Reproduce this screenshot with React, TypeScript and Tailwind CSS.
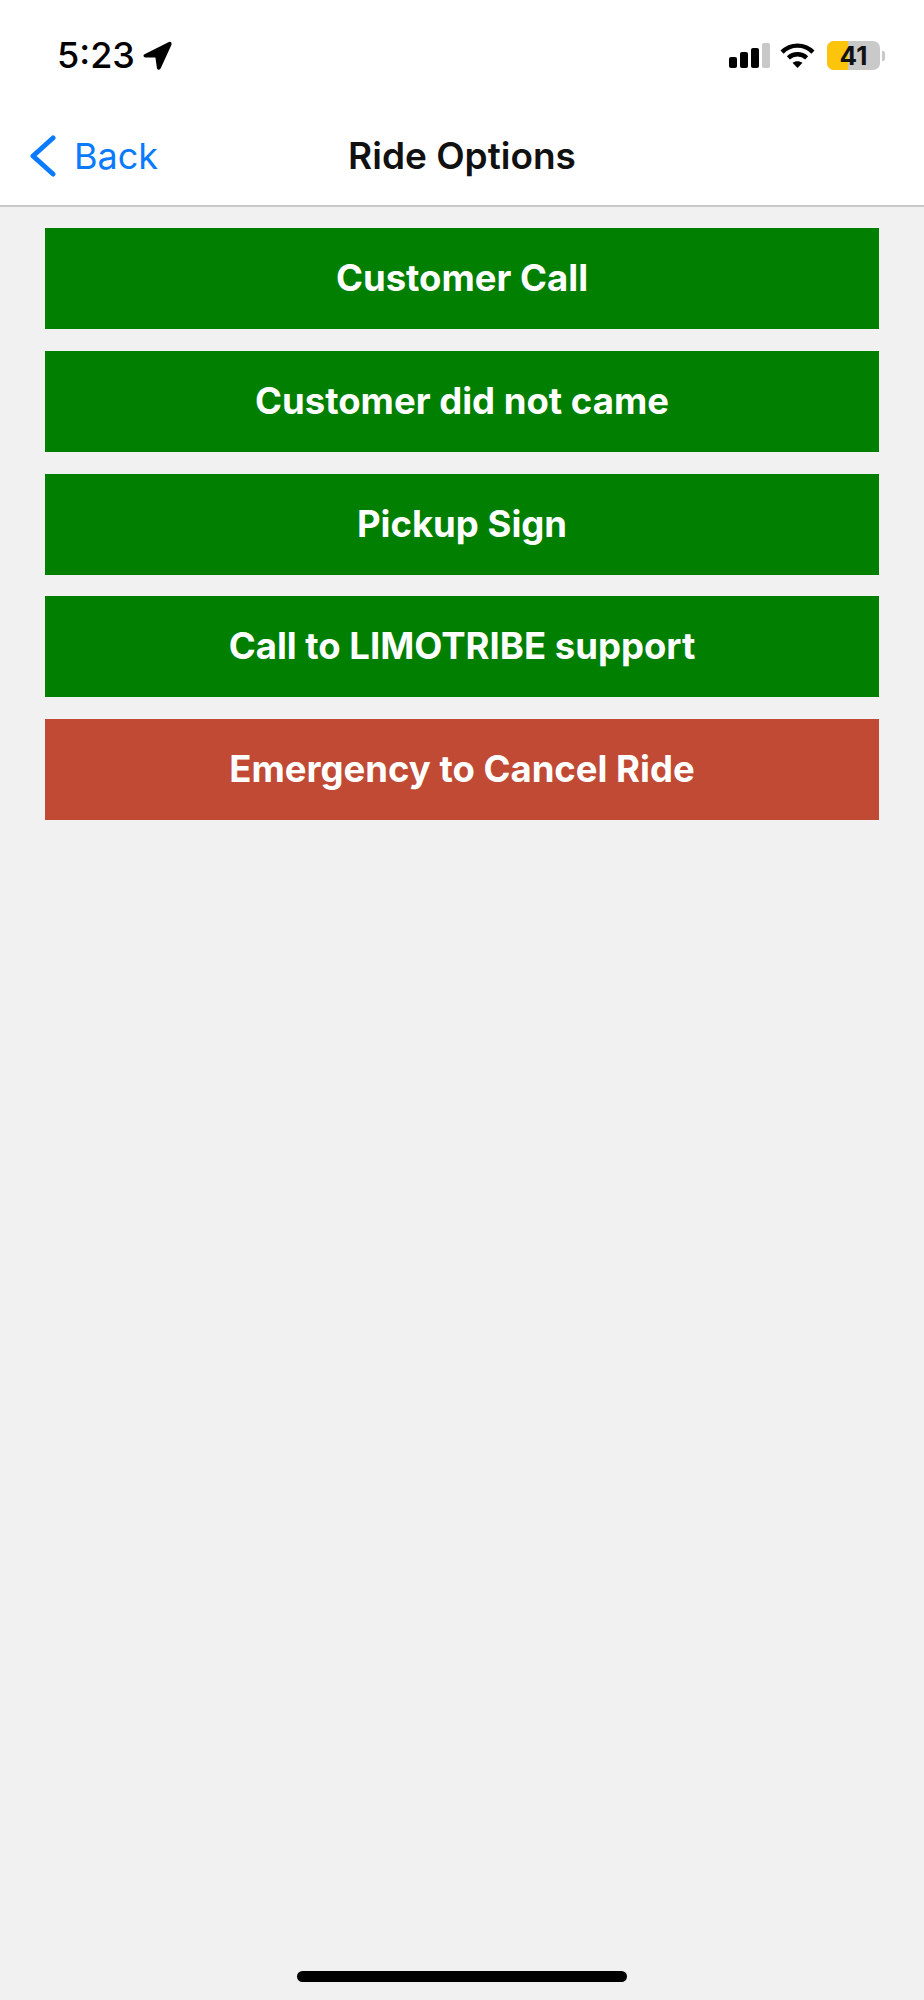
const options = [
  { label: 'Customer Call', color: 'bg-[#007f00]' },
  { label: 'Customer did not came', color: 'bg-[#007f00]' },
  { label: 'Pickup Sign', color: 'bg-[#007f00]' },
  { label: 'Call to LIMOTRIBE support', color: 'bg-[#007f00]' },
  { label: 'Emergency to Cancel Ride', color: 'bg-[#c14a34]' },
]

function StatusBar() {
  return (
    <div className="flex h-[110px] items-start justify-between pl-[57px] pr-[39px] pt-[35px]">
      <div className="flex items-center gap-[8px]">
        <span className="text-[36px] leading-[40px] font-medium text-black">5:23</span>
        <svg width="29" height="29" viewBox="0 0 28 28" fill="black">
          <path d="M1 13 L25 1 Q28 0 27.5 3.5 L17 26.5 Q15 28.8 13.5 26.5 L12 16 L2 16 Q-0.5 15 1 13Z" />
        </svg>
      </div>
      <div className="flex items-center pt-[6px]">
        <div className="mr-[10px] flex items-end gap-[3px]">
          <div className="h-[11px] w-[8px] rounded-[2px] bg-black" />
          <div className="h-[16px] w-[8px] rounded-[2px] bg-black" />
          <div className="h-[20px] w-[8px] rounded-[2px] bg-black" />
          <div className="h-[25px] w-[8px] rounded-[2px] bg-[#c8c8c8]" />
        </div>
        <svg className="mr-[12px]" width="35" height="27" viewBox="0 0 36 28" fill="none" stroke="black" strokeWidth="4.6">
          <path d="M2 10.5 C11 1.5 25 1.5 34 10.5" />
          <path d="M8.5 16.5 C14 11.5 22 11.5 27.5 16.5" />
          <path d="M18 27 L12.8 21.5 C15.5 19.3 20.5 19.3 23.2 21.5 Z" fill="black" stroke="none" />
        </svg>
        <div className="flex items-center gap-[2px]">
          <div className="relative flex h-[29px] w-[53px] items-center justify-center rounded-[7px] bg-[#c9c9c9]">
            <div className="absolute inset-y-0 left-0 w-[21px] rounded-l-[7px] bg-[#fcc40a]" />
            <span className="relative text-[26px] leading-[29px] font-bold text-[#111111]">41</span>
          </div>
          <div className="h-[10px] w-[3px] rounded-r-[2px] bg-[#c9c9c9]" />
        </div>
      </div>
    </div>
  )
}

export default function App() {
  return (
    <div className="flex min-h-[2000px] flex-col bg-[#f1f1f2] font-['Inter',sans-serif]">
      <header className="border-b-2 border-[#c8c8c8] bg-white">
        <StatusBar />
        <div className="relative flex h-[95px] items-start justify-center pt-[23px]">
          <div className="absolute left-[29px] top-[25px] flex items-center gap-[17px]">
            <svg width="28" height="42" viewBox="0 0 28 42" fill="none" stroke="#0a7aff" strokeWidth="5" strokeLinecap="round" strokeLinejoin="round">
              <path d="M24 3 L4 21 L24 39" />
            </svg>
            <span className="text-[36px] leading-[42px] text-[#0a7aff]">Back</span>
          </div>
          <h1 className="text-[37px] leading-[46px] font-semibold text-[#111111]">Ride Options</h1>
        </div>
      </header>
      <main className="flex flex-col gap-[21.75px] px-[45px] pt-[21px]">
        {options.map((option) => (
          <button key={option.label} className={`h-[101px] text-[36.5px] font-bold text-white ${option.color}`}>
            {option.label}
          </button>
        ))}
      </main>
      <div className="mt-auto flex justify-center pb-[18px]">
        <div className="h-[11px] w-[330px] rounded-full bg-black" />
      </div>
    </div>
  )
}
